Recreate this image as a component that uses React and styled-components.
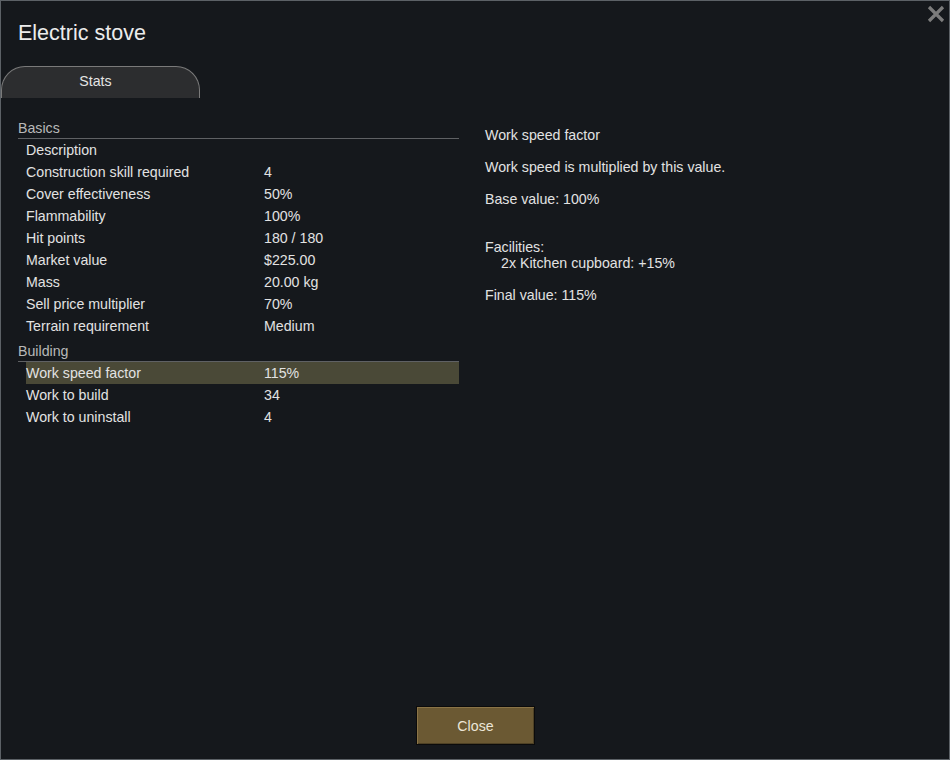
import React from 'react'
import styled, { createGlobalStyle } from 'styled-components'

const Global = createGlobalStyle`
  html, body {
    margin: 0;
    padding: 0;
    background: #15181c;
  }
  body {
    font-family: "Liberation Sans", Arial, sans-serif;
  }
`;

const Window = styled.div`
  position: relative;
  box-sizing: border-box;
  width: 950px;
  height: 760px;
  background: #15181c;
  border: 1px solid #5c6166;
  display: flex;
  flex-direction: column;
  color: #dedede;
`;

const CloseX = styled.div`
  position: absolute;
  top: 3px;
  right: 3px;
  width: 20px;
  height: 20px;
  cursor: pointer;
`;

const Title = styled.div`
  padding: 19px 0 0 17px;
  font-size: 21.5px;
  line-height: 26px;
  color: #ececec;
`;

const Tabs = styled.div`
  display: flex;
  margin-top: 20px;
  height: 32px;
`;

const Tab = styled.div`
  box-sizing: border-box;
  width: 199px;
  height: 32px;
  padding-right: 10px;
  background: #2c2d2f;
  border: 1px solid #7a7a7a;
  border-bottom: none;
  border-radius: 24px 24px 0 0;
  font-size: 14.2px;
  text-align: center;
  line-height: 28px;
  color: #e4e4e4;
`;

const Body = styled.div`
  flex: 1;
  display: flex;
  padding: 16px 0 0 17px;
`;

const Left = styled.div`
  width: 441px;
`;

const Section = styled.div`
  font-size: 14.2px;
  color: #b8b8b8;
  line-height: 20px;
  padding-top: 4px;
  border-bottom: 1px solid #5f6164;
`;

const Row = styled.div`
  display: flex;
  height: 22px;
  align-items: center;
  margin-left: 8px;
  font-size: 14.2px;
  color: #e2e2e2;
  background: ${p => (p.active ? '#4a4937' : 'transparent')};
`;

const Label = styled.span`
  width: 238px;
`;

const Right = styled.div`
  margin-left: 26px;
  padding-top: 13px;
  font-size: 14.2px;
  color: #e2e2e2;
`;

const Para = styled.div`
  line-height: 16px;
  margin-bottom: ${p => p.gap ?? 16}px;
  padding-left: ${p => (p.indent ? 16 : 0)}px;
`;

const Footer = styled.div`
  display: flex;
  justify-content: center;
  padding: 0 0 14px 0;
`;

const Button = styled.button`
  box-sizing: border-box;
  width: 119px;
  height: 39px;
  margin-left: 1px;
  background: #6b5933;
  border: 1px solid #0b0b0b;
  box-shadow: inset 1px 1px 0 #8a7447, inset -1px -1px 0 #4e4125;
  color: #ece6d8;
  font-family: "Liberation Sans", Arial, sans-serif;
  font-size: 14.2px;
  cursor: pointer;
`;

const basics = [
  ['Description', ''],
  ['Construction skill required', '4'],
  ['Cover effectiveness', '50%'],
  ['Flammability', '100%'],
  ['Hit points', '180 / 180'],
  ['Market value', '$225.00'],
  ['Mass', '20.00 kg'],
  ['Sell price multiplier', '70%'],
  ['Terrain requirement', 'Medium'],
];

const building = [
  ['Work speed factor', '115%', true],
  ['Work to build', '34'],
  ['Work to uninstall', '4'],
];

export default function App() {
  return (
    <Window>
      <Global />
      <CloseX>
        <svg width="20" height="20" viewBox="0 0 20 20">
          <path d="M3 3 L17 17 M17 3 L3 17" stroke="#7c7c7c" strokeWidth="3.2" />
        </svg>
      </CloseX>
      <Title>Electric stove</Title>
      <Tabs>
        <Tab>Stats</Tab>
      </Tabs>
      <Body>
        <Left>
          <Section>Basics</Section>
          {basics.map(([l, v]) => (
            <Row key={l}>
              <Label>{l}</Label>
              <span>{v}</span>
            </Row>
          ))}
          <Section>Building</Section>
          {building.map(([l, v, a]) => (
            <Row key={l} active={a}>
              <Label>{l}</Label>
              <span>{v}</span>
            </Row>
          ))}
        </Left>
        <Right>
          <Para>Work speed factor</Para>
          <Para>Work speed is multiplied by this value.</Para>
          <Para gap={32}>Base value: 100%</Para>
          <Para gap={0}>Facilities:</Para>
          <Para indent>2x Kitchen cupboard: +15%</Para>
          <Para>Final value: 115%</Para>
        </Right>
      </Body>
      <Footer>
        <Button>Close</Button>
      </Footer>
    </Window>
  )
}
